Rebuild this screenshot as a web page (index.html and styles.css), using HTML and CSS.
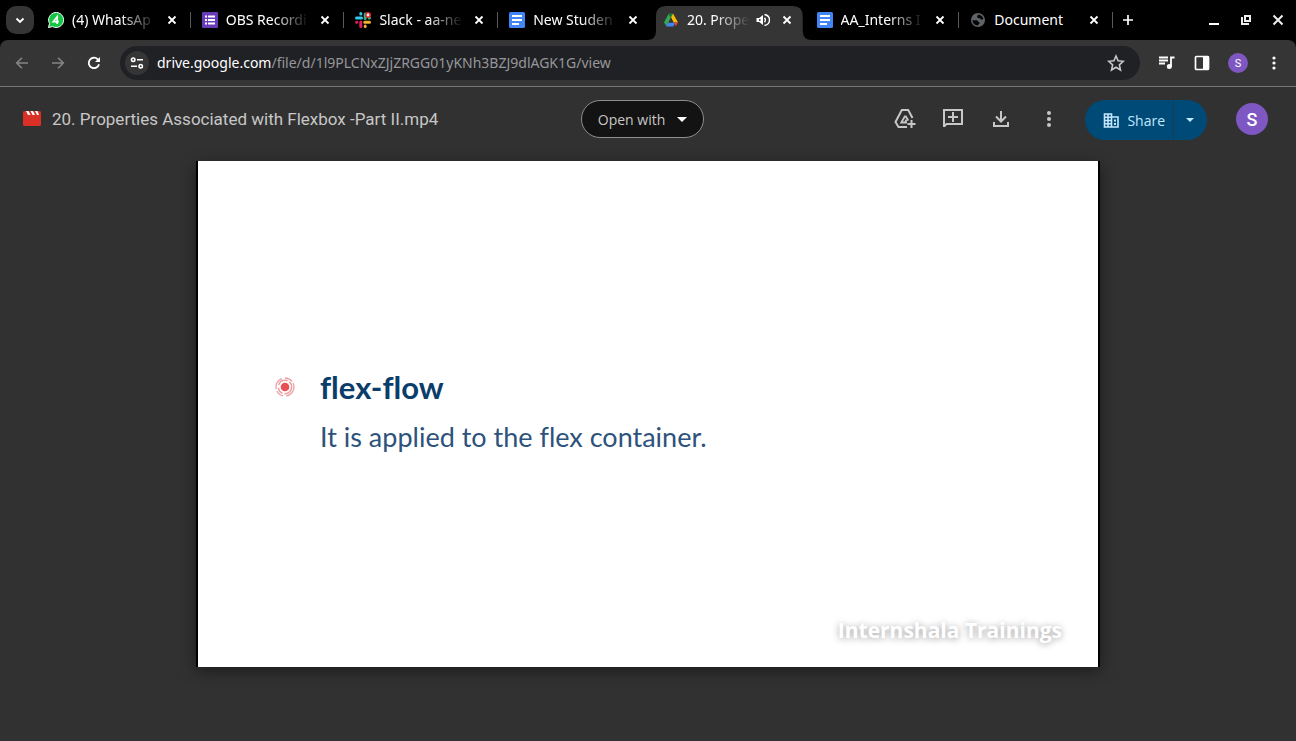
FILE: index.html
```html
<!DOCTYPE html>
<html lang="en">
<head>
<meta charset="utf-8">
<title>20. Properties Associated with Flexbox -Part II.mp4</title>
<link rel="stylesheet" href="styles.css">
</head>
<body>
<svg class="defs" aria-hidden="true">
  <symbol id="close" viewBox="0 0 16 16"><path d="M4.500 4.500l7 7M11.500 4.500l-7 7" stroke="currentColor" stroke-width="1.800"/></symbol>
  <symbol id="docs" viewBox="0 0 16 16"><rect width="16" height="16" rx="1.500" fill="#4285f4"/><path d="M3 4h10M3 8h10M3 12h7" stroke="#fff" stroke-width="2"/></symbol>
</svg>
<div class="tabstrip">
  <button class="tab-search" aria-label="Search tabs"><svg width="16" height="16" viewBox="0 0 16 16"><path d="M4.500 6.500L8 10l3.500-3.500" fill="none" stroke="#fff" stroke-width="1.900"/></svg></button>
  <nav class="tabs" aria-label="Tabs">
    <div class="tab">
      <svg class="favicon" viewBox="0 0 16 16"><path d="M.5 15.500l1-4A7.500 7.500 0 1 1 4.600 14.600z" fill="#12c843" stroke="#fff"/><path d="M9.200 12V4.600L5.300 9.600h5.500" fill="none" stroke="#fff" stroke-width="1.700"/></svg>
      <span class="tab-title">(4) WhatsAp</span><button class="tab-close" aria-label="Close tab"><svg><use href="#close"/></svg></button>
    </div>
    <div class="tab">
      <svg class="favicon" viewBox="0 0 16 16"><rect width="16" height="16" rx="1" fill="#673ab7"/><path d="M3 4.500h2M6 4.500h7M3 8h2M6 8h7M3 11.500h2M6 11.500h7" stroke="#fff" stroke-width="2"/></svg>
      <span class="tab-title">OBS Recordi</span><button class="tab-close" aria-label="Close tab"><svg><use href="#close"/></svg></button>
    </div>
    <div class="tab">
      <svg class="favicon" viewBox="0 0 16 16" fill="none" stroke-width="3" stroke-linecap="round"><path d="M1.500 6h5M5.800 1.600v.4" stroke="#36c5f0"/><path d="M10.200 2v4.500M14.200 6h.3" stroke="#2eb67d"/><path d="M9.700 10.200h4.800M10.200 14v.4" stroke="#ecb22e"/><path d="M5.800 10v4.500M1.600 10.200h.3" stroke="#e01e5a"/><circle cx="13" cy="3" r="2.200" fill="#fff" stroke="#e3262f" stroke-width="1.600"/></svg>
      <span class="tab-title">Slack - aa-ne</span><button class="tab-close" aria-label="Close tab"><svg><use href="#close"/></svg></button>
    </div>
    <div class="tab before-active">
      <svg class="favicon"><use href="#docs"/></svg>
      <span class="tab-title">New Studen</span><button class="tab-close" aria-label="Close tab"><svg><use href="#close"/></svg></button>
    </div>
    <div class="tab active">
      <svg class="tab-shape" viewBox="0 0 165 34" preserveAspectRatio="none"><path d="M0 34Q9 34 9 25V10Q9 0 19 0H146Q156 0 156 10V25Q156 34 165 34z" fill="#353535"/></svg>
      <svg class="favicon" viewBox="0 0 16 16"><path d="M5.500 2L8 6 6 9.500 3.300 14 1 10.500z" fill="#34a853"/><path d="M5.500 2L6 1.500h4L8 5.700z" fill="#188038"/><path d="M10 1.500l5 9h-4.500L8 5.500z" fill="#fbbc04"/><path d="M5.300 10.500h7l-2 4H3z" fill="#4285f4"/><path d="M11 10.500h4l-2.100 3.700z" fill="#ea4335"/><path d="M8 5.500l2.500 5h-5z" fill="#353535"/></svg>
      <span class="tab-title">20. Prope</span>
      <svg class="sound" viewBox="0 0 14 14" aria-label="Playing audio"><path d="M.5 5v4h2.700L7 12V2L3.200 5z" fill="#fff"/><circle cx="3.800" cy="7" r=".9" fill="#353535"/><path d="M8.500 4.800q1.700 2.200 0 4.400M8.500 1.500q5 1 5 5.500t-5 5.500" fill="none" stroke="#fff" stroke-width="1.400"/></svg>
      <button class="tab-close" aria-label="Close tab"><svg><use href="#close"/></svg></button>
    </div>
    <div class="tab">
      <svg class="favicon"><use href="#docs"/></svg>
      <span class="tab-title">AA_Interns I</span><button class="tab-close" aria-label="Close tab"><svg><use href="#close"/></svg></button>
    </div>
    <div class="tab">
      <svg class="favicon" viewBox="0 0 16 16"><circle cx="8" cy="8" r="7" fill="#5f6368"/><path d="M8.500 2.600c2 .2 4.200 1.800 4.800 4.200-1.500 1.600-2.800.8-3.300-.8-.7-.4-1 .5-2 .2-1-.6-1.300-2.200.5-3.600zM2.500 8.200h4c1.500 0 1.500 2 3 2 .5 1.500-1 1.500-1.400 3.200-3 .2-5.500-2.200-5.600-5.200z" fill="#050505"/></svg>
      <span class="tab-title">Document</span><button class="tab-close" aria-label="Close tab"><svg><use href="#close"/></svg></button>
    </div>
  </nav>
  <button class="icon-button" aria-label="New tab"><svg width="16" height="16" viewBox="0 0 16 16"><path d="M8 3v10M3 8h10" stroke="#fff" stroke-width="1.700"/></svg></button>
  <div class="window-controls">
    <button aria-label="Minimize"><svg width="16" height="16" viewBox="0 0 16 16"><path d="M3 12h10" stroke="#fff" stroke-width="2"/></svg></button>
    <button aria-label="Restore"><svg width="16" height="16" viewBox="0 0 16 16" fill="none" stroke="#eee" stroke-width="2"><path d="M7 4h5v5H7zM4 5v7h7"/></svg></button>
    <button aria-label="Close window"><svg width="16" height="16" viewBox="0 0 16 16"><path d="M3.500 3.500l9 9M12.500 3.500l-9 9" stroke="#eee" stroke-width="2"/></svg></button>
  </div>
</div>

<div class="toolbar">
  <button class="icon-button dim" aria-label="Back"><svg width="16" height="16" viewBox="0 0 16 16"><path d="M14 8H3M8 2.700L2.700 8 8 13.300"/></svg></button>
  <button class="icon-button dim" aria-label="Forward"><svg width="16" height="16" viewBox="0 0 16 16"><path d="M2 8h11M8 2.700L13.300 8 8 13.300"/></svg></button>
  <button class="icon-button" aria-label="Reload"><svg width="16" height="16" viewBox="0 0 16 16"><path d="M13 9.200A5.200 5.200 0 1 1 11.700 4.300L13 5.600" fill="none" stroke="#fff" stroke-width="1.800"/><path d="M14 2v5H9z" fill="#fff"/></svg></button>
  <div class="omnibox">
    <button class="site-info" aria-label="Site information"><svg width="14" height="14" viewBox="0 0 14 14" fill="none" stroke="#fff" stroke-width="1.600"><circle cx="3.200" cy="3.700" r="1.700"/><path d="M7 3.700h6M1 10.200h6"/><circle cx="10.700" cy="10.200" r="1.700"/></svg></button>
    <a class="url" href="#video"><b>drive.google.com</b>/file/d/1l9PLCNxZJjZRGG01yKNh3BZJ9dlAGK1G/view</a>
    <button class="icon-button" aria-label="Bookmark this tab"><svg width="18" height="18" viewBox="0 0 18 18"><path d="M9 2l2.100 4.800 5.200.5-3.900 3.500 1.100 5.200L9 13.300 4.500 16l1.100-5.200-3.900-3.500 5.200-.5z" fill="none" stroke="#c7c7c7" stroke-width="1.600"/></svg></button>
  </div>
  <button class="icon-button" aria-label="Media controls"><svg width="18" height="18" viewBox="0 0 18 18"><path d="M2 3.500h9M2 6.500h9M2 9.500h6M14 13V3.500h3.500" fill="none" stroke="#fff" stroke-width="1.800"/><circle cx="12.300" cy="12.500" r="2.500" fill="#fff"/></svg></button>
  <button class="icon-button" aria-label="Side panel"><svg width="16" height="16" viewBox="0 0 16 16"><rect x="1.500" y="1.500" width="13" height="13" rx="1" fill="none" stroke="#fff" stroke-width="1.700"/><path d="M9 1h6v14H9z" fill="#fff"/></svg></button>
  <button class="avatar small" aria-label="Profile">S</button>
  <button class="icon-button" aria-label="Browser menu"><svg width="16" height="16" viewBox="0 0 16 16" fill="#fff"><circle cx="8" cy="3" r="1.600"/><circle cx="8" cy="8" r="1.600"/><circle cx="8" cy="13" r="1.600"/></svg></button>
</div>

<header class="drive">
  <div class="file">
    <svg width="18" height="16" viewBox="0 0 18 16"><path d="M0 1.500Q0 0 1.500 0h15Q18 0 18 1.500v12q0 1.500-1.500 1.500h-15Q0 15 0 13.500z" fill="#d93025"/><path d="M3 0h2.500l2 4H5zM7.500 0H10l2 4H9.500zM12 0h2.500l1.500 4h-2z" fill="#fff"/></svg>
    <h1>20. Properties Associated with Flexbox -Part II.mp4</h1>
  </div>
  <button class="open-with">Open with <svg width="10" height="5" viewBox="0 0 10 5"><path d="M0 0h10L5 5z" fill="#fff"/></svg></button>
  <div class="actions">
    <button class="action" aria-label="Add shortcut to Drive"><svg width="24" height="24" viewBox="0 0 24 24" fill="none" stroke="#c7c7c7" stroke-width="2"><path d="M14 20H5.500L2.500 15 8.800 3h6.400l4.300 8"/><path d="M14 15.500H8.300l3.500-6h1l2.500 4M12 15.500l1.500-2.700" stroke-width="1.800"/><path d="M18.500 13v8M14.500 17h8"/></svg></button>
    <button class="action" aria-label="Add a comment"><svg width="24" height="24" viewBox="0 0 24 24" fill="none" stroke="#c7c7c7" stroke-width="2"><path d="M3 20V3h18v14H5.500L3 19.500M12 5v10M7 10h10"/></svg></button>
    <button class="action" aria-label="Download"><svg width="24" height="24" viewBox="0 0 24 24" fill="none" stroke="#c7c7c7" stroke-width="2"><path d="M12 4v10M7 9.500l5 5 5-5M5 15v4h14v-4"/></svg></button>
    <button class="action" aria-label="More actions"><svg width="24" height="24" viewBox="0 0 24 24" fill="#c7c7c7"><circle cx="12" cy="6" r="2"/><circle cx="12" cy="12" r="2"/><circle cx="12" cy="18" r="2"/></svg></button>
    <div class="share">
      <button class="share-main"><svg width="16" height="16" viewBox="0 0 16 16"><path d="M1.500 2h7v13h-7zM8.500 5H15v10H8.500M5 2v13M1.500 5.300h7M1.500 8.500h7M1.500 11.700h7" fill="none" stroke="#c2e7ff" stroke-width="1.600"/><path d="M11 7.500h2v2h-2zM11 11h2v2h-2z" fill="#c2e7ff"/></svg>Share</button>
      <button class="share-more" aria-label="Share options"><svg width="8" height="4" viewBox="0 0 8 4"><path d="M0 0h8L4 4z" fill="#c2e7ff"/></svg></button>
    </div>
    <button class="avatar" aria-label="Account">S</button>
  </div>
</header>

<main id="video">
  <section class="player">
    <div class="point">
      <svg width="22" height="22" viewBox="0 0 22 22" fill="none" stroke="#eea0a2"><circle cx="11" cy="11" r="9" stroke-width="1.300" stroke-dasharray="13 3 8 2"/><circle cx="11" cy="11" r="6.700" stroke-width="1.500" stroke-dasharray="11 2 7 3"/><circle cx="11" cy="11" r="4.300" fill="#e65156" stroke="none"/></svg>
      <div>
        <h2>flex-flow</h2>
        <p>It is applied to the flex container.</p>
      </div>
    </div>
    <span class="watermark">Internshala Trainings</span>
  </section>
</main>
</body>
</html>
```
FILE: styles.css
```css
* { box-sizing: border-box; }
body {
  margin: 0;
  min-height: 100vh;
  display: flex;
  flex-direction: column;
  background: #000;
  color: #fff;
  font-family: "Noto Sans", sans-serif;
  font-size: 14px;
}
button {
  display: inline-flex;
  align-items: center;
  justify-content: center;
  flex-shrink: 0;
  padding: 0;
  border: 0;
  background: none;
  color: inherit;
  font: inherit;
}
svg { flex-shrink: 0; display: block; }
h1, h2, p { margin: 0; }
.defs { position: absolute; width: 0; height: 0; }

.tabstrip { display: flex; align-items: center; height: 40px; padding: 0 6px; }
.tab-search { width: 28px; height: 28px; border-radius: 10px; background: #353535; }
.tabs { display: flex; flex: 1; min-width: 0; margin-left: 2px; }
.tab {
  position: relative;
  display: flex;
  align-items: center;
  flex: 1 1 0;
  min-width: 0;
  height: 40px;
  padding: 0 10px 0 12px;
}
.tab::after {
  content: "";
  position: absolute;
  right: -1px;
  top: 12px;
  width: 1px;
  height: 16px;
  background: #5a5a5a;
}
.active::after, .before-active::after { display: none; }
.favicon { width: 16px; height: 16px; }
.tab-title {
  flex: 1;
  min-width: 0;
  margin: 0 8px;
  overflow: hidden;
  white-space: nowrap;
  line-height: 20px;
  mask-image: linear-gradient(to right, #000 calc(100% - 36px), transparent);
}
.tab:last-child .tab-title { mask-image: none; }
.tab-close, .tab-close svg { width: 16px; height: 16px; }
.active { isolation: isolate; }
.tab-shape {
  position: absolute;
  z-index: -1;
  left: -4px;
  bottom: 0;
  width: calc(100% + 11px);
  height: 34px;
}
.sound { width: 14px; height: 14px; margin-right: 9px; }
.active .tab-title { margin-right: 6px; }
.icon-button { width: 36px; height: 32px; }
.tabstrip > .icon-button { width: 32px; }
.window-controls { display: flex; gap: 16px; margin: 0 4px 0 62px; }

.toolbar {
  display: flex;
  align-items: center;
  height: 47px;
  padding: 0 4px;
  border-bottom: 1px solid #757575;
  border-radius: 8px 8px 0 0;
  background: #353535;
}
.dim path { fill: none; stroke: #858585; stroke-width: 1.600; }
.omnibox {
  display: flex;
  align-items: center;
  flex: 1;
  min-width: 0;
  height: 34px;
  margin: 0 8px;
  padding: 0 6px 0 5px;
  border-radius: 17px;
  background: #202125;
}
.site-info { width: 24px; height: 24px; border-radius: 50%; background: #353535; }
.url {
  flex: 1;
  min-width: 0;
  margin-left: 8px;
  overflow: hidden;
  white-space: nowrap;
  color: #969799;
  line-height: 20px;
  text-decoration: none;
}
.url b { color: #fff; font-weight: 400; }
.avatar {
  width: 32px;
  height: 32px;
  border-radius: 50%;
  background: #7e57c2;
  font: 500 18px Roboto, sans-serif;
}
.avatar.small { width: 20px; height: 20px; margin: 0 8px; font-size: 11px; font-weight: 400; }

.drive {
  display: grid;
  grid-template-columns: 1fr auto 1fr;
  align-items: center;
  height: 64px;
  padding: 0 28px 0 23px;
  background: #313131;
  font-family: "Open Sans", sans-serif;
}
.file { display: flex; align-items: center; gap: 11px; min-width: 0; }
.file h1 { color: #c7c7c7; font: 400 17px/24px Roboto, sans-serif; white-space: nowrap; }
.open-with {
  gap: 12px;
  height: 38px;
  margin-right: 6px;
  padding: 0 16px;
  border: 1px solid #8e8e8e;
  border-radius: 19px;
  background: #131313;
  color: #c7c7c7;
}
.actions { display: flex; align-items: center; justify-content: flex-end; }
.action { width: 48px; height: 48px; }
.share { display: flex; height: 40px; margin: 2px 29px 0 12px; border-radius: 20px; background: #004a77; overflow: hidden; color: #c2e7ff; }
.share-main { gap: 8px; padding: 0 8px 0 18px; }
.share-more { width: 34px; padding-right: 2px; border-left: 1px solid #1b3c50; }

main {
  display: flex;
  flex: 1;
  padding: 10px 196px 74px;
  background: #313131;
}
.player {
  position: relative;
  flex: 1;
  display: flex;
  flex-direction: column;
  justify-content: center;
  padding: 0 76px 4px;
  border: solid #000;
  border-width: 0 2px;
  background: #fff;
  box-shadow: 0 4px 14px rgb(0 0 0 / 45%);
}
.point { display: flex; gap: 24px; color: #0b3d6b; font-family: Lato, sans-serif; font-variant-ligatures: none; }
.point svg { margin-top: 9px; }
.point h2 { font-size: 31px; line-height: 40px; }
.point p { margin-top: 10px; font-size: 27px; line-height: 40px; color: #2d527b; }
.watermark {
  position: absolute;
  right: 36px;
  bottom: 23px;
  font: 700 21px/28px "Open Sans", sans-serif;
  color: #fff;
  text-shadow: 0 1px 7px rgb(0 0 0 / 40%);
}
```
